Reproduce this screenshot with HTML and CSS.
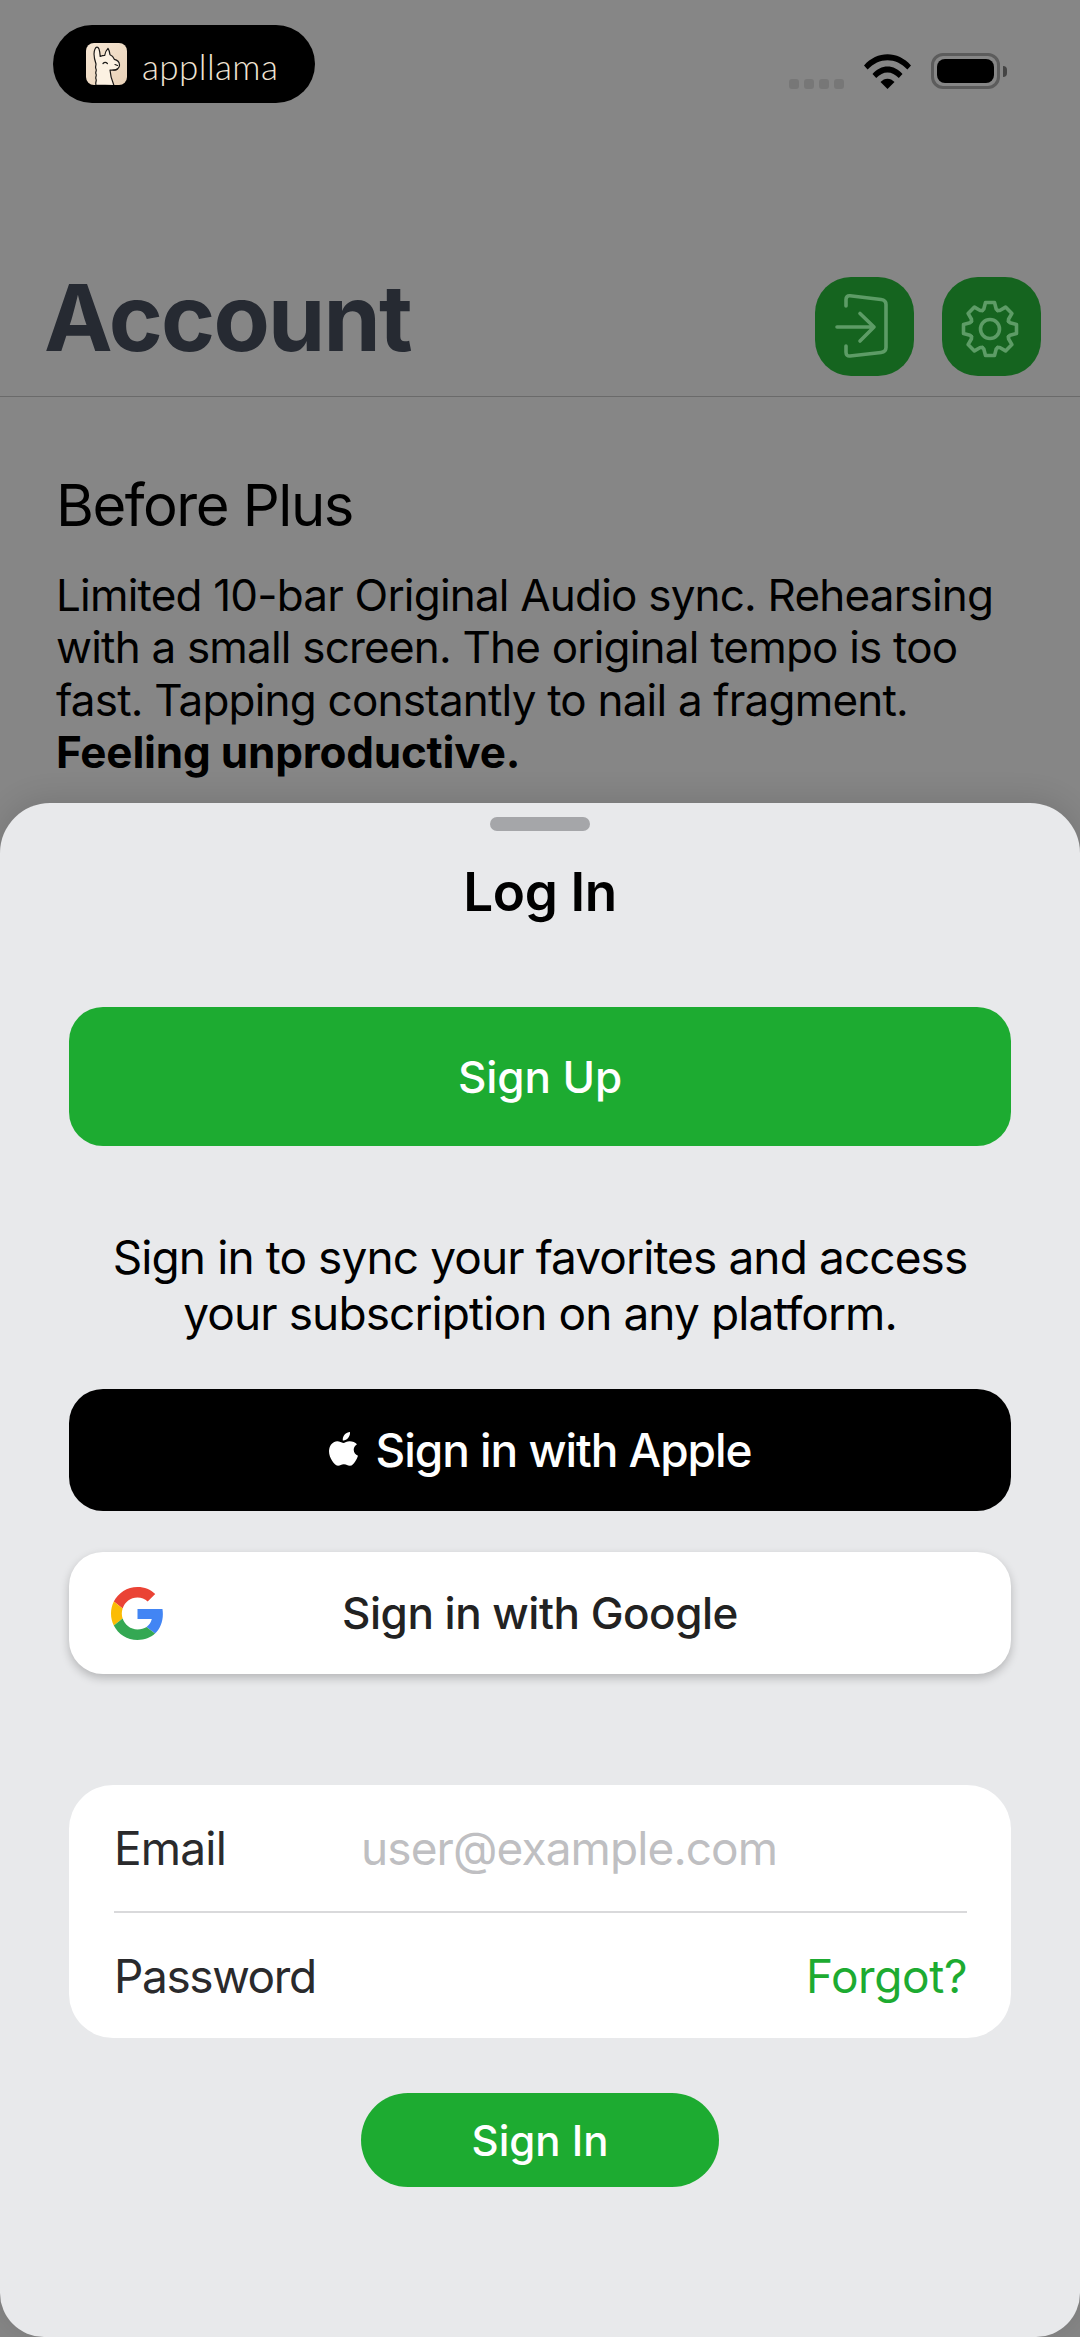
FILE: index.html
```html
<!DOCTYPE html>
<html lang="en">
<head>
<meta charset="utf-8">
<title>Account</title>
<link rel="stylesheet" href="styles.css">
</head>
<body>
<div class="screen">
  <div class="status">
    <div class="brand">
      <svg class="brand-icon" viewBox="0 0 41 42" aria-hidden="true">
        <defs>
          <linearGradient id="tile" x1="0" y1="0" x2="1" y2="1">
            <stop offset="0" stop-color="#f6e6d3"/>
            <stop offset="1" stop-color="#e9d2b8"/>
          </linearGradient>
        </defs>
        <rect width="41" height="42" rx="8" fill="url(#tile)"/>
        <path d="M10 42c-1-3 1-4 0-6s1-3 0-5 1-3 0-5 0-3 0-5C8 15 7.500 9 9 6c1-2.500 3-2.500 4 0 .8 2 1 5 1.200 7.500 1.500-.8 3-1.200 4.500-1.200.5-3 1.800-5.500 3.300-7 1 1.500 1.800 4 2 6.500 2 .8 3.500 2.500 4.300 4.500 2.500.5 5 2.500 5.200 5.500.2 3-2.500 5-5.500 5.200-1.500.1-3 .1-4 0 .3 5 2 11 4 15.500z" fill="#fcf1e2" stroke="#1c1a18" stroke-width="1.200" stroke-linejoin="round"/>
        <path d="M17 20.500q2.200-2.400 4.400 0M29 21.500l2.500 1M27 27q2.500.6 4.500-1" fill="none" stroke="#1c1a18" stroke-width="1.200" stroke-linecap="round"/>
      </svg>
      <span class="brand-name">appllama</span>
    </div>
    <div class="indicators">
      <div class="signal"><i></i><i></i><i></i><i></i></div>
      <svg class="wifi" viewBox="0 0 47 35" aria-hidden="true">
        <path d="M0 11.500C13-3.500 34-3.500 47 11.500l-3.600 4C32 3 15 3 3.600 15.500z"/>
        <path d="M8.500 20C17 10 30 10 38.500 20l-3.700 4C28 16.500 19 16.500 12.200 24z"/>
        <path d="M16.500 28c4-4.500 10-4.500 14 0l-7 7z"/>
      </svg>
      <div class="battery"><div class="battery-body"><div class="battery-level"></div></div><div class="battery-nub"></div></div>
    </div>
  </div>

  <header class="title-row">
    <h1 class="title">Account</h1>
    <div class="actions">
      <div class="action">
        <svg viewBox="0 0 99 99" aria-hidden="true">
          <path d="M31 29V22.500c0-2.500 1.500-4 4-3.700l31 3.700c3 .4 5 2 5 5v43c0 3-2 4.600-5 5l-31 3.500c-2.500.3-4-1.200-4-3.700V69" fill="none" stroke="#5d9c66" stroke-width="3.600" stroke-linecap="round" stroke-linejoin="round"/>
          <path d="M22 50H59M45 36.500 59 50 45 64" fill="none" stroke="#5d9c66" stroke-width="3.600" stroke-linecap="round" stroke-linejoin="round"/>
        </svg>
      </div>
      <div class="action">
        <svg viewBox="0 0 99 99" aria-hidden="true">
          <defs>
            <path id="tooth" d="M-7.650-18.500-6.200-20-4.500-26.500H4.500L6.200-20 7.650-18.500"/>
          </defs>
          <g transform="translate(48 52)" fill="none" stroke="#5d9c66" stroke-width="3.600" stroke-linejoin="round" stroke-linecap="round">
            <use href="#tooth"/>
            <use href="#tooth" transform="rotate(45)"/>
            <use href="#tooth" transform="rotate(90)"/>
            <use href="#tooth" transform="rotate(135)"/>
            <use href="#tooth" transform="rotate(180)"/>
            <use href="#tooth" transform="rotate(225)"/>
            <use href="#tooth" transform="rotate(270)"/>
            <use href="#tooth" transform="rotate(315)"/>
            <circle r="9.500"/>
          </g>
        </svg>
      </div>
    </div>
  </header>

  <section class="intro">
    <h2 class="intro-title">Before Plus</h2>
    <p class="intro-text">Limited 10-bar Original Audio sync. Rehearsing with a small screen. The original tempo is too fast. Tapping constantly to nail a fragment. <strong>Feeling unproductive.</strong></p>
  </section>

  <div class="sheet">
    <div class="handle"></div>
    <h2 class="sheet-title">Log In</h2>
    <button class="btn btn-signup">Sign Up</button>
    <p class="sync-text">Sign in to sync your favorites and access your subscription on any platform.</p>
    <button class="btn btn-apple">
      <svg class="apple-logo" viewBox="0 0 29 36" aria-hidden="true">
        <path d="M21 0c.2 2.300-.6 4.300-1.900 5.900-1.300 1.500-3.300 2.700-5.300 2.500-.3-2.200.7-4.400 1.900-5.800C17 1.100 19.200.1 21 0zM28 12.300c-1.700 1.100-3.300 2.900-3.300 5.500 0 3 1.900 5 4.300 6-.6 1.800-1.400 3.500-2.500 5.100-1.500 2.300-3.200 4.900-5.700 4.900-2.400 0-3.100-1.500-5.900-1.500s-3.600 1.500-5.900 1.500c-2.500 0-4.400-2.700-5.900-5C.9 25.600-.5 21 .2 17.300c.6-4.300 3.900-8 8-8 2.400 0 4.300 1.600 6 1.600 1.600 0 3.700-1.700 6.400-1.700 2.900 0 5.700 1.200 7.400 3.100z"/>
      </svg>
      <span>Sign in with Apple</span>
    </button>
    <button class="btn btn-google">
      <svg class="google-logo" viewBox="0 0 48 48" aria-hidden="true">
        <path fill="#EA4335" d="M24 9.500c3.540 0 6.710 1.220 9.210 3.600l6.850-6.850C35.900 2.380 30.470 0 24 0 14.620 0 6.510 5.380 2.560 13.220l7.980 6.190C12.430 13.720 17.740 9.500 24 9.500z"/>
        <path fill="#4285F4" d="M46.980 24.550c0-1.570-.15-3.090-.38-4.550H24v9.020h12.940c-.58 2.960-2.260 5.480-4.780 7.180l7.730 6c4.510-4.180 7.090-10.360 7.090-17.650z"/>
        <path fill="#FBBC05" d="M10.530 28.590c-.48-1.450-.76-2.990-.76-4.590s.27-3.140.76-4.590l-7.980-6.190C.92 16.460 0 20.120 0 24c0 3.880.92 7.540 2.560 10.780l7.970-6.190z"/>
        <path fill="#34A853" d="M24 48c6.480 0 11.930-2.130 15.890-5.810l-7.730-6c-2.150 1.450-4.920 2.300-8.160 2.300-6.260 0-11.570-4.220-13.470-9.910l-7.980 6.190C6.510 42.620 14.620 48 24 48z"/>
      </svg>
      <span>Sign in with Google</span>
    </button>
    <div class="form-card">
      <div class="form-row">
        <span class="form-label">Email</span>
        <span class="form-placeholder">user@example.com</span>
      </div>
      <div class="form-row form-row-last">
        <span class="form-label form-label-tight">Password</span>
        <span class="forgot">Forgot?</span>
      </div>
    </div>
    <button class="btn btn-signin">Sign In</button>
  </div>
</div>
</body>
</html>
```

FILE: styles.css
```css
* { box-sizing: border-box; }
html, body { margin: 0; padding: 0; }
body {
  width: 1080px;
  height: 2337px;
  overflow: hidden;
  font-family: Inter, "Liberation Sans", sans-serif;
  background: #868686;
}
h1, h2, p { margin: 0; font-weight: inherit; }

.screen {
  position: relative;
  width: 1080px;
  height: 2337px;
  overflow: hidden;
  background: #868686;
  color: #000;
}

/* status bar */
.status {
  height: 168px;
  padding: 25px 73px 0 53px;
  display: flex;
  justify-content: space-between;
  align-items: flex-start;
}
.brand {
  width: 262px;
  height: 78px;
  border-radius: 39px;
  background: #000;
  display: flex;
  align-items: center;
  padding-left: 33px;
  gap: 15px;
}
.brand-icon { width: 41px; height: 42px; flex: none; }
.brand-name {
  font-family: Lato, sans-serif;
  font-weight: 300;
  font-size: 35px;
  line-height: 42px;
  margin-top: 3px;
  color: #f0e4d4;
  letter-spacing: .4px;
}
.indicators {
  display: flex;
  align-items: flex-start;
  padding-top: 28px;
}
.signal { display: flex; gap: 5px; margin-top: 26px; margin-right: 20px; }
.signal i {
  display: block;
  width: 10px;
  height: 10px;
  border-radius: 3px;
  background: #777;
}
.wifi { width: 47px; height: 35px; margin-top: 1px; margin-right: 20px; fill: #000; }
.battery { display: flex; align-items: center; height: 36px; }
.battery-body {
  width: 69px;
  height: 36px;
  border: 3px solid #5c5c5c;
  border-radius: 12px;
  padding: 3px;
}
.battery-level { width: 100%; height: 100%; border-radius: 8px; background: #000; }
.battery-nub {
  width: 4px;
  height: 11px;
  margin-left: 3px;
  background: #444;
  border-radius: 0 5px 5px 0;
}

/* title */
.title-row {
  height: 229px;
  padding: 0 39px 0 44px;
  border-bottom: 1px solid #6a6a6a;
  display: flex;
  justify-content: space-between;
  align-items: flex-start;
}
.title {
  font-size: 92px;
  font-weight: 700;
  line-height: 100px;
  color: #262a32;
  margin-top: 100px;
  letter-spacing: -1.800px;
}
.actions { display: flex; gap: 28px; margin-top: 109px; }
.action {
  width: 99px;
  height: 99px;
  border-radius: 36px;
  background: #15641f;
}
.action svg { display: block; width: 99px; height: 99px; }

/* intro */
.intro { padding: 76px 56px 0; color: #000; }
.intro-title { font-size: 58px; line-height: 64px; font-weight: 400; letter-spacing: -1.500px; }
.intro-text {
  margin-top: 32px;
  width: 966px;
  font-size: 44px;
  line-height: 52.400px;
  letter-spacing: -.8px;
}
.intro-text strong { font-weight: 700; letter-spacing: -.2px; }

/* sheet */
.sheet {
  position: absolute;
  left: 0;
  top: 803px;
  width: 1080px;
  height: 1534px;
  background: #e8e9eb;
  border-radius: 50px 50px 44px 44px;
  box-shadow: 0 -4px 30px rgba(0, 0, 0, .12);
  padding: 14px 69px 0;
  display: flex;
  flex-direction: column;
  align-items: center;
}
.handle { width: 100px; height: 14px; border-radius: 7px; background: #a5a6a9; flex: none; }
.sheet-title {
  margin-top: 29px;
  font-size: 53px;
  line-height: 64px;
  font-weight: 600;
  color: #000;
  letter-spacing: -.4px;
}
.btn {
  border: 0;
  padding: 0;
  margin: 0;
  font-family: inherit;
  flex: none;
  display: flex;
  align-items: center;
  justify-content: center;
  width: 942px;
}
.btn-signup {
  margin-top: 83px;
  height: 139px;
  border-radius: 34px;
  background: #1dab31;
  color: #fff;
  font-size: 44px;
  font-weight: 500;
  letter-spacing: -.1px;
}
.sync-text {
  margin-top: 83px;
  width: 900px;
  text-align: center;
  font-size: 46px;
  line-height: 56px;
  letter-spacing: -.9px;
  color: #000;
}
.btn-apple {
  margin-top: 48px;
  height: 122px;
  border-radius: 34px;
  background: #000;
  color: #fff;
  font-size: 46px;
  font-weight: 500;
  letter-spacing: -1.050px;
  gap: 18px;
}
.apple-logo { width: 29px; height: 36px; fill: #fff; flex: none; }
.btn-google {
  position: relative;
  margin-top: 41px;
  height: 122px;
  border-radius: 34px;
  background: #fff;
  color: #222;
  font-size: 44px;
  font-weight: 500;
  letter-spacing: -.5px;
  box-shadow: 0 4px 10px rgba(0, 0, 0, .22);
}
.google-logo { position: absolute; left: 42px; top: 35px; width: 53px; height: 53px; }
.form-card {
  margin-top: 111px;
  width: 942px;
  height: 253px;
  flex: none;
  border-radius: 44px;
  background: #fff;
  padding: 0 44px 0 45px;
}
.form-row {
  height: 128px;
  display: flex;
  align-items: center;
  border-bottom: 2px solid #d9d9db;
  font-size: 46px;
}
.form-row-last { height: 125px; border-bottom: 0; justify-content: space-between; }
.form-label { color: #2a2a2c; width: 247px; flex: none; letter-spacing: -.8px; }
.form-label-tight { letter-spacing: -1.400px; }
.form-placeholder { color: #bfbfc2; letter-spacing: -.9px; }
.forgot { color: #1dab31; letter-spacing: -.4px; }
.btn-signin {
  margin-top: 55px;
  width: 358px;
  height: 94px;
  border-radius: 47px;
  background: #1dab31;
  color: #fff;
  font-size: 42px;
  font-weight: 500;
}
```
